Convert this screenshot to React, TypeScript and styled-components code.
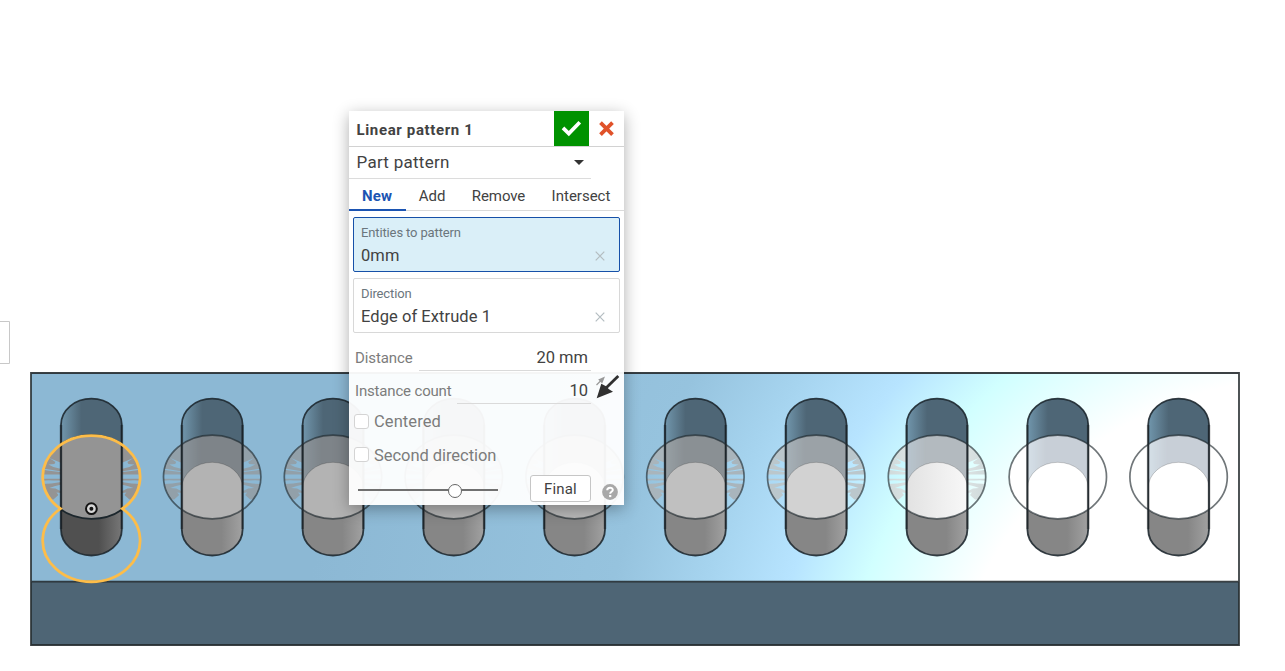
import React from "react";
import styled, { createGlobalStyle } from "styled-components";

const GlobalStyle = createGlobalStyle`
  * { box-sizing: border-box; }
  body { margin: 0; background: #fff; overflow: hidden; }
  body, button { font-family: Roboto, "Liberation Sans", sans-serif; }
`;

const Viewport = styled.main`
  position: relative;
  width: 1285px;
  height: 671px;
  overflow: hidden;
  background: #fff;
`;

const Scene = styled.svg`
  display: block;
`;

const Dialog = styled.section`
  position: absolute;
  left: 349px;
  top: 111px;
  width: 275px;
  height: 394px;
  display: flex;
  flex-direction: column;
  background: rgba(255, 255, 255, 0.95);
  box-shadow: 0 4px 15px rgba(0, 0, 0, 0.32);
  color: #333;
`;

const Label = styled.span<{ $size: number; $spacing?: number; $color?: string; $weight?: number }>`
  font-size: ${(p) => p.$size}px;
  letter-spacing: ${(p) => p.$spacing ?? 0}px;
  color: ${(p) => p.$color ?? "#424242"};
  font-weight: ${(p) => p.$weight ?? 400};
  line-height: 20px;
  white-space: nowrap;
`;

const Header = styled.header`
  display: flex;
  height: 36px;
  border-bottom: 1px solid #d2d2d2;
  align-items: stretch;
`;

const Title = styled.div`
  flex: 1;
  padding: 9px 0 0 7.5px;
`;

const HeaderButton = styled.button<{ $accept?: boolean }>`
  width: 35px;
  height: 35px;
  padding: 0;
  border: 0;
  display: grid;
  place-items: center;
  background: ${(p) => (p.$accept ? "#009200" : "transparent")};
`;

const TypeSelect = styled.div`
  width: 242px;
  height: 32px;
  border-bottom: 1px solid #dcdcdc;
  display: flex;
  justify-content: space-between;
  padding: 5px 7px 0 7.5px;
`;

const Caret = styled.svg`
  margin-top: 8px;
`;

const Tabs = styled.nav`
  display: flex;
  height: 32px;
  border-bottom: 1px solid #dadada;
`;

const Tab = styled.div<{ $width: number; $active?: boolean }>`
  width: ${(p) => p.$width}px;
  height: 32px;
  padding: 7px 1px 0 0;
  text-align: center;
  border-bottom: 2px solid ${(p) => (p.$active ? "#1b54b2" : "transparent")};
`;

const Field = styled.div<{ $selected?: boolean }>`
  height: 55px;
  margin: 6px 4px 0;
  padding: 5px 14px 0 7px;
  border: 1px solid ${(p) => (p.$selected ? "#1650a8" : "#d8d8d8")};
  border-radius: 2px;
  background: ${(p) => (p.$selected ? "#daeff8" : "#fff")};
  display: flex;
  flex-direction: column;
  gap: 3px;
`;

const FieldValue = styled.div`
  display: flex;
  justify-content: space-between;
  align-items: center;
  height: 20px;
`;

const NumberRow = styled.div`
  margin: 7px 33px 0 6px;
  height: 26px;
  display: flex;
  align-items: flex-end;
  gap: 6px;

  ${Field} + & {
    margin-top: 12px;
  }
`;

const NumberName = styled.div`
  height: 23px;
`;

const NumberInput = styled.div`
  flex: 1;
  height: 23px;
  text-align: right;
  padding-right: 3px;
  border-bottom: 1px solid #dadada;
`;

const FlipButton = styled.svg`
  position: absolute;
  left: 246px;
  top: 262px;
`;

const CheckRow = styled.div`
  display: flex;
  align-items: flex-start;
  height: 20px;
  margin: 8px 0 0 5px;
  gap: 5px;

  & + & {
    margin-top: 14px;
  }
`;

const CheckBox = styled.span`
  width: 15px;
  height: 15px;
  margin-top: 2px;
  border: 1px solid #d4d4d4;
  border-radius: 3px;
  background: #fff;

  ${CheckRow} + ${CheckRow} > & {
    margin-top: 1px;
  }
`;

const Footer = styled.footer`
  display: flex;
  align-items: center;
  margin: 9px 5px 0 9px;
  height: 27px;
`;

const Slider = styled.div`
  width: 140px;
  height: 2px;
  background: #707070;
  margin: 3px 32px 0 0;
  display: flex;
  align-items: center;
`;

const Knob = styled.span`
  width: 14px;
  height: 14px;
  flex: none;
  margin: 1px 0 0 90px;
  border: 1px solid #666;
  border-radius: 50%;
  background: #fff;
`;

const FinalButton = styled.button`
  width: 61px;
  height: 27px;
  padding: 0;
  border: 1px solid #c6c6c6;
  border-radius: 3px;
  background: #fff;
`;

const Help = styled.svg`
  margin: 6px 0 0 11px;
`;

const CX0 = 91.4;
const PITCH = 120.8;
const CY = 477;
const INK = "#1c272d";

type Tone = { disk: string; lens: string; lensEdge: string; flank: string };

const base: Tone = { disk: "#b3b3b3", lens: "#7e8489", lensEdge: "#8a959c", flank: "#92a0a9" };
const tones: Tone[] = [
  { disk: "#949494", lens: "#949494", lensEdge: "#949494", flank: "#949494" },
  base,
  base,
  base,
  { disk: "#b9b9b9", lens: "#84898d", lensEdge: "#909aa0", flank: "#9aa8b1" },
  { disk: "#c0c0c0", lens: "#8a9094", lensEdge: "#98a1a6", flank: "#a9b5bc" },
  { disk: "#d2d2d2", lens: "#9ba2a7", lensEdge: "#a7b2b9", flank: "#bbc7cc" },
  { disk: "url(#paleDisk)", lens: "#b3babf", lensEdge: "#b8c5cf", flank: "url(#paleFlank)" },
  { disk: "#fff", lens: "#c8cfd7", lensEdge: "#d5e0e8", flank: "#fff" },
  { disk: "#fff", lens: "#c8cfd7", lensEdge: "#d5e0e8", flank: "#fff" },
];

const FLANK =
  "M-30-42H-52V-8L-45-8L-30-5.5V-8L-38-10L-43-12.5L-37-13L-36-15L-42-19L-36-16.5L-30-14Z" +
  "M-52-8L-44-6.5L-30-4.8V-2.6H-52Z" +
  "M-52 1.7H-30V3.4L-38 3.6L-43 3.2L-52 4Z" +
  "M-52 7L-40 6.6L-30 5V7.4L-37 9.2L-42 11L-36 11.5L-31 14L-30 16L-35 15.5L-33 18L-38 22.5H-52Z";

function Slot({ index }: { index: number }) {
  const t = tones[index];
  const first = index === 0;
  const white = index > 7;
  return (
    <g transform={`translate(${CX0 + PITCH * index} ${CY})`}>
      {white ? (
        <ellipse rx="48.7" ry="41.8" fill="#fff" />
      ) : (
        <g clipPath="url(#lensClip)">
          <path d={FLANK} fill={t.flank} />
          <path d={FLANK} transform="scale(-1 1)" fill={t.flank} />
        </g>
      )}
      <g clipPath="url(#slotClip)">
        <rect x="-31" y="-79" width="62" height="80" fill="url(#slotTop)" />
        <rect x="-31" y="0" width="62" height="80" fill={first ? "url(#slotDark)" : "url(#slotBottom)"} />
        <ellipse rx="48.7" ry="41.8" fill={t.lens} />
        {!first && (
          <g clipPath="url(#lensClip)">
            <rect x="-31" y="-42" width="20" height="84" fill={t.lensEdge} mask="url(#edgeMask)" />
            <path d="M-30.5 60V11.3A30.5 26 0 0 1 30.5 11.3V60Z" fill={t.disk} stroke="#000" strokeOpacity=".18" />
          </g>
        )}
        {first && <ellipse rx="48.7" ry="41.8" fill="none" stroke={INK} strokeWidth="1.8" />}
      </g>
      <rect
        x="-30.4"
        y="-78.3"
        width="60.8"
        height="156.8"
        rx="30.4"
        ry="26"
        fill="none"
        stroke={INK}
        strokeOpacity=".88"
        strokeWidth="1.8"
      />
      <path d="M-30.4-52V52M30.4-52V52" stroke="#000" strokeOpacity=".25" strokeWidth="2.8" />
      {!first && <ellipse rx="48.7" ry="41.8" fill="none" stroke="#20282d" strokeOpacity=".64" strokeWidth="1.7" />}
    </g>
  );
}

function Model() {
  return (
    <Scene width="1285" height="671" viewBox="0 0 1285 671">
      <defs>
        <radialGradient id="plate" gradientUnits="userSpaceOnUse" cx="1300" cy="730" r="1300">
          <stop offset=".27" stopColor="#fff" />
          <stop offset=".353" stopColor="#d1ffff" />
          <stop offset=".408" stopColor="#b7e4ff" />
          <stop offset=".47" stopColor="#a6d4ef" />
          <stop offset=".54" stopColor="#96c3de" />
          <stop offset=".77" stopColor="#8cb8d4" />
        </radialGradient>
        <linearGradient id="slotTop">
          <stop offset=".02" stopColor="#7095ab" />
          <stop offset=".34" stopColor="#4e6676" />
          <stop offset="1" stopColor="#4e6676" />
        </linearGradient>
        <linearGradient id="slotBottom">
          <stop offset=".65" stopColor="#868686" />
          <stop offset="1" stopColor="#a2a2a2" />
        </linearGradient>
        <linearGradient id="slotDark">
          <stop offset=".62" stopColor="#505050" />
          <stop offset="1" stopColor="#787878" />
        </linearGradient>
        <linearGradient id="paleDisk">
          <stop offset="0" stopColor="#e2e2e2" />
          <stop offset="1" stopColor="#f8f8f8" />
        </linearGradient>
        <linearGradient id="paleFlank" gradientUnits="userSpaceOnUse" x1="-50" x2="-28" y1="0" y2="0">
          <stop offset="0" stopColor="#ced9da" />
          <stop offset="1" stopColor="#dce3e3" />
        </linearGradient>
        <linearGradient id="fade">
          <stop offset="0" stopColor="#fff" />
          <stop offset="1" stopColor="#000" />
        </linearGradient>
        <mask id="edgeMask" maskUnits="userSpaceOnUse" x="-31" y="-42" width="20" height="84">
          <rect x="-31" y="-42" width="20" height="84" fill="url(#fade)" />
        </mask>
        <clipPath id="lensClip">
          <ellipse rx="48.7" ry="41.8" />
        </clipPath>
        <clipPath id="slotClip">
          <rect x="-30.5" y="-78.5" width="61" height="157" rx="30.5" ry="26" />
        </clipPath>
      </defs>
      <path d="M-2 321.5H9.5V363.5H-2" fill="none" stroke="#c8c8c8" />
      <rect x="31" y="373" width="1208" height="209" fill="url(#plate)" />
      <rect x="31" y="582" width="1208" height="63" fill="#4e6575" />
      <path d="M31 373H1239V645H31ZM31 581.7H1239" fill="none" stroke="#262c30" strokeOpacity=".9" strokeWidth="1.8" />
      {tones.map((_, i) => (
        <Slot key={i} index={i} />
      ))}
      <path
        d="M60.5 508.7A48.7 41.2 0 1 1 122.3 508.7A48.7 41.2 0 1 1 60.5 508.7Z"
        fill="none"
        stroke="#fdbd49"
        strokeWidth="2.8"
      />
      <circle cx="91.4" cy="508.7" r="5.4" fill="#d6d6d6" stroke="#141414" strokeWidth="2" />
      <circle cx="91.4" cy="508.7" r="2" fill="#141414" />
    </Scene>
  );
}

function ClearIcon() {
  return (
    <svg width="10" height="10" viewBox="0 0 10 10">
      <path d="M.7.7l8.6 8.6M9.3.7L.7 9.3" stroke="#b4bdc1" strokeWidth="1.2" />
    </svg>
  );
}

export default function App() {
  return (
    <Viewport>
      <GlobalStyle />
      <Model />
      <Dialog>
        <Header>
          <Title>
            <Label $size={15} $weight={700} $spacing={0.64}>Linear pattern 1</Label>
          </Title>
          <HeaderButton $accept aria-label="Accept">
            <svg width="21" height="17" viewBox="0 0 21 17">
              <path d="M2 7.9L7.8 13.6L18.8 2.2" fill="none" stroke="#fff" strokeWidth="3.7" />
            </svg>
          </HeaderButton>
          <HeaderButton aria-label="Cancel">
            <svg width="16" height="16" viewBox="0 0 16 16">
              <path d="M1.5 1.7L13.5 13.7M13.5 1.7L1.5 13.7" stroke="#e0522a" strokeWidth="3.8" />
            </svg>
          </HeaderButton>
        </Header>
        <TypeSelect>
          <Label $size={17} $spacing={0.27}>Part pattern</Label>
          <Caret width="10" height="5" viewBox="0 0 10 5">
            <path d="M0 0H10L5 5Z" fill="#333" />
          </Caret>
        </TypeSelect>
        <Tabs>
          <Tab $width={57} $active><Label $size={15} $weight={700} $spacing={0.15} $color="#1b54b2">New</Label></Tab>
          <Tab $width={53}><Label $size={15}>Add</Label></Tab>
          <Tab $width={80}><Label $size={15} $spacing={-0.1}>Remove</Label></Tab>
          <Tab $width={85}><Label $size={15}>Intersect</Label></Tab>
        </Tabs>
        <Field $selected>
          <Label $size={13} $spacing={-0.13} $color="#6b767d">Entities to pattern</Label>
          <FieldValue><Label $size={16.5} $spacing={0.1}>0mm</Label><ClearIcon /></FieldValue>
        </Field>
        <Field>
          <Label $size={13} $spacing={-0.13} $color="#6b767d">Direction</Label>
          <FieldValue><Label $size={16.5} $spacing={0.06}>Edge of Extrude 1</Label><ClearIcon /></FieldValue>
        </Field>
        <NumberRow>
          <NumberName><Label $size={15} $spacing={-0.1} $color="#7c7c7c">Distance</Label></NumberName>
          <NumberInput><Label $size={16.5}>20 mm</Label></NumberInput>
        </NumberRow>
        <NumberRow>
          <NumberName><Label $size={15} $spacing={-0.17} $color="#7c7c7c">Instance count</Label></NumberName>
          <NumberInput><Label $size={16.5}>10</Label></NumberInput>
        </NumberRow>
        <FlipButton width="26" height="27" viewBox="0 0 26 27">
          <path d="M1.5 12L6 7.5" stroke="#999" strokeWidth="1.3" />
          <path d="M10 3.5L3.2 6.5L7.2 10.4Z" fill="#999" />
          <path d="M23.3 3L11 15" stroke="#303030" strokeWidth="2.8" />
          <path d="M1.7 25.3L6.3 10.8L11 13.2L14 16.2L18 18.8Z" fill="#303030" />
        </FlipButton>
        <CheckRow><CheckBox /><Label $size={16.5} $spacing={0.08} $color="#7c7c7c">Centered</Label></CheckRow>
        <CheckRow><CheckBox /><Label $size={16.5} $spacing={-0.05} $color="#7c7c7c">Second direction</Label></CheckRow>
        <Footer>
          <Slider><Knob /></Slider>
          <FinalButton><Label $size={15} $spacing={0.15}>Final</Label></FinalButton>
          <Help width="16" height="16" viewBox="0 0 16 16">
            <circle cx="8" cy="8" r="7.9" fill="#a8a8a8" />
            <path d="M5.2 6.2C5.3 2.8 10.9 2.9 10.8 6C10.7 7.8 8.2 7.7 8.2 9.7" fill="none" stroke="#fff" strokeWidth="2" />
            <rect x="7.1" y="11" width="2.2" height="2.1" fill="#fff" />
          </Help>
        </Footer>
      </Dialog>
    </Viewport>
  );
}
